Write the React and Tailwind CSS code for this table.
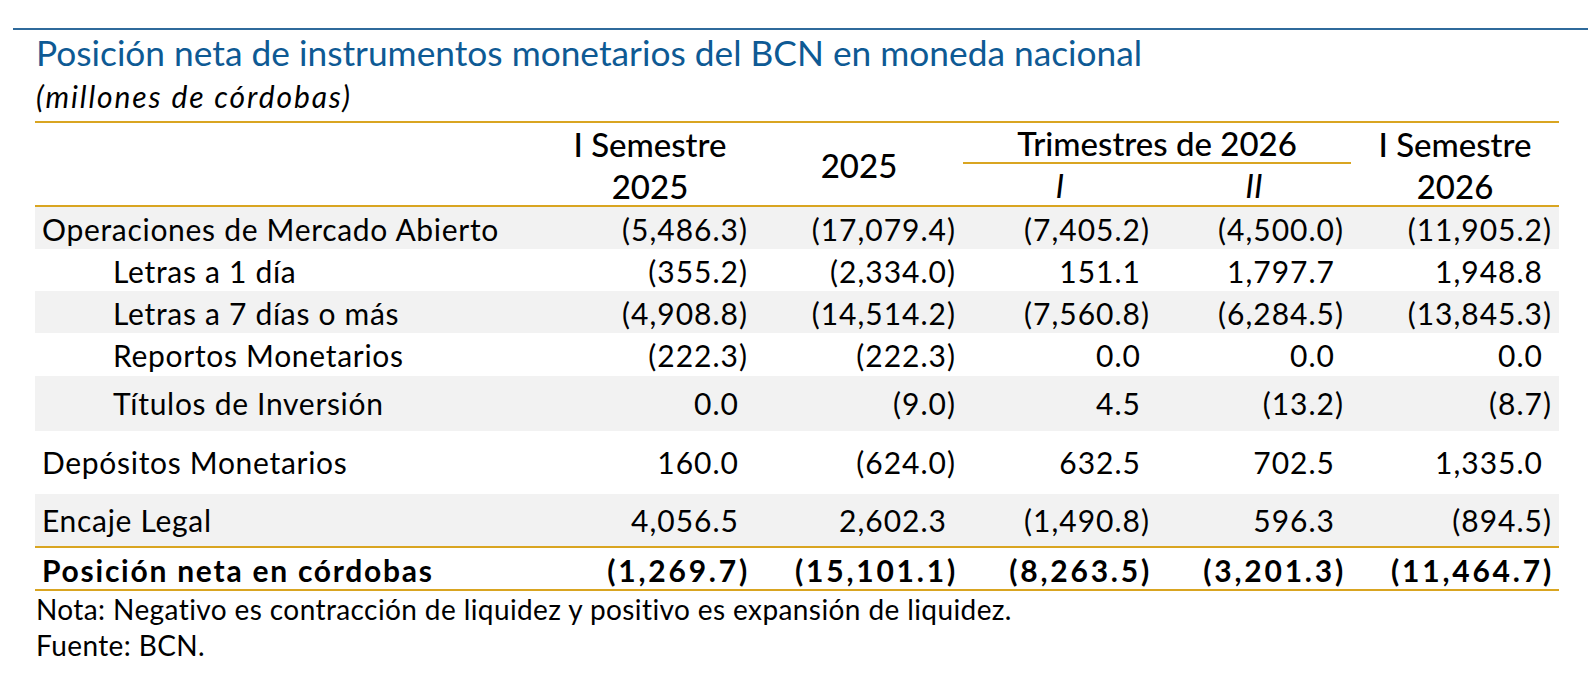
import React from 'react';

const rows = [
  { label: 'Operaciones de Mercado Abierto', indent: false, gray: true, h: 'h-[42px]', values: ['(5,486.3)', '(17,079.4)', '(7,405.2)', '(4,500.0)', '(11,905.2)'] },
  { label: 'Letras a 1 día', indent: true, gray: false, h: 'h-[42px]', values: ['(355.2)', '(2,334.0)', '151.1', '1,797.7', '1,948.8'] },
  { label: 'Letras a 7 días o más', indent: true, gray: true, h: 'h-[42px]', values: ['(4,908.8)', '(14,514.2)', '(7,560.8)', '(6,284.5)', '(13,845.3)'] },
  { label: 'Reportos Monetarios', indent: true, gray: false, h: 'h-[43px]', values: ['(222.3)', '(222.3)', '0.0', '0.0', '0.0'] },
  { label: 'Títulos de Inversión', indent: true, gray: true, h: 'h-[55px]', values: ['0.0', '(9.0)', '4.5', '(13.2)', '(8.7)'] },
  { label: 'Depósitos Monetarios', indent: false, gray: false, h: 'h-[63px]', values: ['160.0', '(624.0)', '632.5', '702.5', '1,335.0'] },
  { label: 'Encaje Legal', indent: false, gray: true, h: 'h-[52px]', values: ['4,056.5', '2,602.3', '(1,490.8)', '596.3', '(894.5)'] },
];

const totals = ['(1,269.7)', '(15,101.1)', '(8,263.5)', '(3,201.3)', '(11,464.7)'];

const cols = 'grid grid-cols-[510px_210px_208px_194px_194px_208px]';

// positive figures keep room for the closing paren, like the Excel "_)" format
const Num = ({ value, bold }) => {
  const neg = value.startsWith('(');
  return (
    <div className={`flex items-center justify-end ${bold ? 'pr-[5px] tracking-[2.8px]' : 'pr-[7px] tracking-[1px]'}`}>
      {value}
      {!neg && <span className="invisible">)</span>}
    </div>
  );
};

const GoldLine = () => <div className="h-[2px] bg-[#d9a521]" />;

export default function App() {
  return (
    <div className="w-[1588px] h-[682px] bg-white text-black font-['Lato',sans-serif] pt-[28px] overflow-hidden">
      <div className="ml-[13px] h-[2px] bg-[#2f6a9b]" />

      <div className="pl-[36px]">
        <h1 className="mt-[3px] text-[35.3px] leading-[40px] text-[#0e5a94]">
          Posición neta de instrumentos monetarios del BCN en moneda nacional
        </h1>
        <p className="mt-[6px] text-[30px] leading-[34px] italic tracking-[1.9px]">(millones de córdobas)</p>
      </div>

      <div className="ml-[35px] w-[1524px] mt-[8px]">
        <GoldLine />

        {/* header */}
        <div className={`${cols} grid-rows-[41px_41px] text-[33px] font-medium leading-[41px]`}>
          <div className="row-span-2" />
          <div className="row-span-2 flex flex-col items-center">
            <span className="pt-[1px]">I Semestre</span>
            <span className="pt-[1px]">2025</span>
          </div>
          <div className="row-span-2 flex items-center justify-center pt-[2px]">2025</div>
          <div className="col-span-2 text-center border-b-2 border-[#d9a521] leading-[39px] pt-[1px]">
            Trimestres de 2026
          </div>
          <div className="row-span-2 flex flex-col items-center">
            <span className="pt-[1px]">I Semestre</span>
            <span className="pt-[1px]">2026</span>
          </div>
          <div className="text-center italic font-normal pt-[1px]">I</div>
          <div className="text-center italic font-normal pt-[1px]">II</div>
        </div>

        <GoldLine />

        {/* body */}
        <div className="text-[30px]">
          {rows.map((r) => (
            <div key={r.label} className={`${cols} ${r.h} ${r.gray ? 'bg-[#f2f2f2]' : 'bg-white'}`}>
              <div className={`flex items-center tracking-[0.7px] ${r.indent ? 'pl-[78px]' : 'pl-[7px]'}`}>{r.label}</div>
              {r.values.map((v, i) => (
                <Num key={i} value={v} />
              ))}
            </div>
          ))}
        </div>

        <GoldLine />
        <div className={`${cols} h-[41px] text-[30px] font-bold`}>
          <div className="flex items-center pl-[7px] tracking-[1.75px]">Posición neta en córdobas</div>
          {totals.map((v, i) => (
            <Num key={i} value={v} bold />
          ))}
        </div>
        <GoldLine />
      </div>

      <div className="pl-[36px] text-[28px] leading-[36px] tracking-[0.4px]">
        <p>Nota: Negativo es contracción de liquidez y positivo es expansión de liquidez.</p>
        <p>Fuente: BCN.</p>
      </div>
    </div>
  );
}
